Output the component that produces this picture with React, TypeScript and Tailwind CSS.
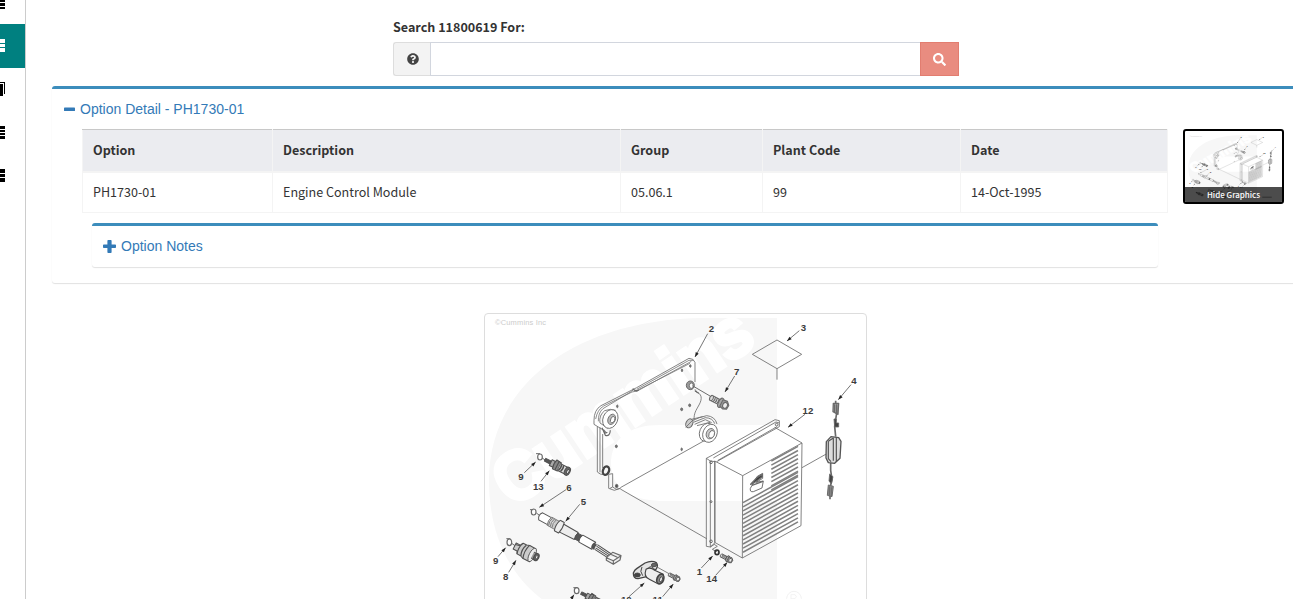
import React from "react";
import { FaSearch, FaQuestionCircle } from "react-icons/fa";

const labels: [string, number, number][] = [
  ["2", 694, 73], ["3", 970, 68], ["7", 770, 200], ["4", 1122, 228], ["12", 984, 319],
  ["9", 123, 516], ["13", 175, 545], ["6", 267, 550], ["5", 310, 591], ["9", 47, 768],
  ["8", 77, 817], ["1", 658, 800], ["14", 695, 823], ["10", 439, 884], ["11", 533, 884], ["9", 268, 896],
];

const arrows: [number, number, number, number][] = [
  [683, 77, 645, 147], [958, 68, 921, 99], [764, 204, 735, 252], [1113, 230, 1075, 275],
  [975, 319, 924, 358], [133, 494, 167, 462], [183, 520, 208, 488], [258, 545, 178, 598],
  [299, 589, 257, 640], [54, 746, 77, 719], [86, 793, 108, 757], [664, 780, 698, 744],
  [707, 802, 742, 763], [447, 866, 493, 825], [548, 866, 580, 828], [272, 875, 282, 860],
];

function Bolt({ x, y, s = 1 }: { x: number; y: number; s?: number }) {
  return (
    <g transform={`translate(${x} ${y}) rotate(27) scale(${s})`} strokeWidth="3.2">
      <path d="M0-8H32V8H0Q-5 0 0-8M6-8q4 8 0 16M12-8q4 8 0 16M18-8q4 8 0 16M24-8q4 8 0 16" fill="#ddd" />
      <ellipse cx="34" cy="0" rx="7" ry="15" fill="#aaa" />
      <path d="M36-11L50-13 59-4 58 9 47 14 36 10Z" fill="#999" />
      <ellipse cx="49" cy="1" rx="7" ry="9" fill="#eee" />
    </g>
  );
}

function Sensor({ x, y, s = 1 }: { x: number; y: number; s?: number }) {
  return (
    <g transform={`translate(${x} ${y}) rotate(27) scale(${s})`} strokeWidth="3.2">
      <path d="M-5-4H14V5H-5Z" fill="#555" />
      <path d="M14-9H30V10H14Z" fill="#aaa" />
      <path d="M27-15L43-13V14L27 15Q22 0 27-15Z" fill="#888" />
      <path d="M35-14V14M43-10H72V12H43" fill="#ddd" />
      <path d="M45-10q5 10 0 21M52-10q5 10 0 21" strokeWidth="4.5" />
      <ellipse cx="70" cy="1" rx="8" ry="13" fill="#666" />
      <ellipse cx="72" cy="1" rx="3.5" ry="7" fill="#eee" />
    </g>
  );
}

function PartsDrawing({ viewBox, className, stretch }: { viewBox: string; className: string; stretch?: boolean }) {
  const slats = Array.from({ length: 19 }, (_, i) => i);
  return (
    <svg viewBox={viewBox} className={className} preserveAspectRatio={stretch ? "none" : "xMinYMin meet"}>
      <path
        d="M777 318H700C568 321 489 390 489 480C489 590 570 640 690 640H777V501H666C636 501 612 493 611 464C611 438 630 425 660 425H777Z"
        fill="#f7f7f7"
      />
      <text
        transform="translate(512 508) rotate(-33.7)"
        fontFamily="Liberation Sans, Arial, sans-serif"
        fontWeight="700"
        fontSize="69"
        textLength="296"
        lengthAdjust="spacingAndGlyphs"
        fill="#fff"
        stroke="#fff"
        strokeWidth="4"
      >
        Cummins
      </text>
      <text x="495" y="325" fontFamily="Liberation Sans, Arial, sans-serif" fontSize="7.5" fill="#ccc" textLength="51">
        ©Cummins Inc
      </text>
      <g transform="translate(480 308) scale(.33333)" fill="none" stroke="#6a6a6a" strokeWidth="2.5" strokeLinejoin="round">
        <circle cx="942" cy="872" r="22" stroke="#f1f1f1" strokeWidth="3" />
        <path d="M933 885V860h12q8 6 0 12h-12m10 0l9 13" stroke="#f1f1f1" />

        {/* Mounting plate */}
        <path d="M352 356V492Q360 500 370 500M360 358V493M368 378V480M645 222V163Q641 151 627 151L470 239 456 246 363 293Q342 306 342 337V349L378 371" />
        <path d="M641 157L627 157 470 244M634 160L472 249 456 252 371 294Q352 305 347 333M461 245L450 253 369 302Q354 315 355 340M468 249L630 166" stroke="#777" />
        <path d="M458 242q8 10 18 4" strokeWidth="4" />
        <path d="M391 304L374 308Q356 322 360 345L384 361M391 304L407 307" />
        <ellipse cx="391" cy="333" rx="22" ry="29" transform="rotate(22 391 333)" fill="#fff" />
        <ellipse cx="395" cy="334" rx="11" ry="16" transform="rotate(22 395 334)" fill="#bbb" />
        <ellipse cx="398" cy="335" rx="6" ry="10" transform="rotate(22 398 335)" fill="#fff" />
        <path d="M366 359L376 382Q390 386 391 367M371 365q3 14 11 8" strokeWidth="3.5" />
        <ellipse cx="378" cy="488" rx="9" ry="13" transform="rotate(20 378 488)" strokeWidth="7" stroke="#444" />
        <path d="M386 499L398 497V537L409 544 421 541M386 499V541L403 547 421 541M398 537L390 541" />
        <ellipse cx="410" cy="534" rx="4" ry="5" fill="#555" />
        <g fill="#777" strokeWidth="3">
          <ellipse cx="412" cy="295" rx="2" ry="4" />
          <ellipse cx="606" cy="187" rx="2" ry="4" />
          <ellipse cx="631" cy="174" rx="2" ry="4" />
          <ellipse cx="605" cy="304" rx="3" ry="4" />
          <ellipse cx="629" cy="292" rx="3" ry="4" />
          <ellipse cx="605" cy="424" rx="2" ry="4" />
          <ellipse cx="409" cy="415" rx="3" ry="4" />
        </g>
        <ellipse cx="631" cy="232" rx="12" ry="13" fill="#999" strokeWidth="3" />
        <ellipse cx="634" cy="233" rx="6" ry="8" fill="#fff" />
        <path d="M637 233L690 264M645 249l12 7" strokeWidth="3" />
        <path d="M644 249C668 257 667 273 657 291S642 315 642 337M645 244l8 12" />
        <ellipse cx="628" cy="346" rx="10" ry="14" transform="rotate(25 628 346)" fill="#ccc" strokeWidth="3" />
        <path d="M617 358L638 337M637 338Q659 327 680 323Q705 325 711 348M640 343L676 329Q699 330 704 347M644 349L676 335 695 344M651 353L690 343M634 334L668 326" />
        <ellipse cx="680" cy="373" rx="21" ry="28" transform="rotate(22 680 373)" fill="#fff" />
        <ellipse cx="690" cy="376" rx="21" ry="28" transform="rotate(22 690 376)" fill="#fff" />
        <ellipse cx="691" cy="377" rx="12" ry="16" transform="rotate(22 691 377)" fill="#ccc" />
        <ellipse cx="695" cy="379" rx="8" ry="12" transform="rotate(22 695 379)" fill="#fff" />
        <Bolt x={692} y={269} />
        <path d="M421 539L671 399M421 543L680 692" />

        {/* Data plate */}
        <path d="M891 96L965 139 891 182 817 139ZM891 182V215" />

        {/* Control module enclosure */}
        <path d="M679 451L698 441 885 335 898 338V356L710 461M700 450L888 342 898 345M714 457L891 356M679 451V715L691 717 705 708M679 451L691 459 705 461V704L691 717V459" />
        <path d="M884 358L966 405 963 653 787 750 704 703V459L788 503 966 405M788 503L787 750" />
        <g strokeWidth="3">
          <circle cx="693" cy="463" r="4" />
          <circle cx="693" cy="581" r="3" />
          <circle cx="693" cy="700" r="4" />
          <circle cx="890" cy="350" r="4" />
        </g>
        <g stroke="#808080" strokeWidth="4.6">
          {slats.map((i) => {
            const y = 415 + i * 12.4;
            return i < 8 ? <path key={i} d={`M954 ${y}L874 ${y + 44}`} /> : null;
          })}
          {slats.map((i) => {
            const y = 584 + i * 12.4;
            return y < 735 ? <path key={i} d={`M954 ${y - 91}L789 ${y}`} /> : null;
          })}
        </g>
        <path d="M811 541L832 505 848 496V511L829 523 850 519 846 540 820 551Q809 553 811 541Z" fill="#fff" stroke="#555" />
        <path d="M812 529L832 508 847 499V506L826 522ZM816 532L849 520" fill="#333" strokeWidth="4" />

        {/* In-line fuse cable */}
        <path d="M966 479L1046 434" />
        <path d="M1067 278V295M1070 315L1064 355L1067 386M1052 465L1052 487L1056 515L1050 540V574" strokeWidth="5" />
        <path d="M1060 286H1076L1074 319 1059 311ZM1064 289V312M1070 289V316" fill="#aaa" strokeWidth="4" />
        <path d="M1062 333h7v12h7v12h-12ZM1049 498l10 8-5 22-7-9Z" fill="#444" />
        <path d="M1045 531L1060 535 1056 566 1042 562ZM1048 535v27M1054 538v26" fill="#888" strokeWidth="3" />
        <path d="M1039 401L1053 386 1076 389 1083 400 1080 451 1064 466 1045 464 1038 450Z" fill="#ddd" strokeWidth="4" stroke="#555" />
        <path d="M1045 400L1060 390V458M1069 388V462M1045 400V452L1053 461" strokeWidth="3.5" stroke="#555" />

        {/* Sensors and harness */}
        <g fill="#fff">
          <ellipse cx="180" cy="447" rx="7" ry="9" strokeWidth="3.5" />
          <ellipse cx="161" cy="612" rx="7" ry="9" strokeWidth="3.5" />
          <ellipse cx="88" cy="703" rx="7" ry="10" strokeWidth="3.5" />
          <ellipse cx="290" cy="848" rx="7" ry="9" strokeWidth="3.5" />
        </g>
        <path d="M168 437h12M186 450l10 6M150 605h10M169 615l8 6M79 692h12M95 706l10 7M280 839h12" strokeWidth="3" />
        <g stroke="#505050">
          <Sensor x={200} y={457} />
          <Sensor x={308} y={857} s={0.9} />
          <g transform="translate(104 714) rotate(27)">
            <path d="M0-10H14L19-19H31L40-22 61-21V22H38L29 18H17L13 10H0Z" fill="#ccc" strokeWidth="3" />
            <path d="M18-18Q11 0 17 18M30-18Q22 0 30 18M39-22Q31 0 39 22M0-5L14-8" strokeWidth="3.5" />
            <ellipse cx="59" cy="0" rx="9" ry="22" fill="#eee" />
            <path d="M60-10H72V10H60" fill="#999" />
            <ellipse cx="73" cy="0" rx="7" ry="11" fill="#666" strokeWidth="4" />
            <ellipse cx="74" cy="0" rx="3" ry="6" fill="#eee" />
          </g>
          <g transform="translate(182 625) rotate(29)">
            <path d="M0-12H30V12H0Q-10 0 0-12Z" fill="#fff" strokeWidth="3" />
            <path d="M30-14H57V14H30Q24 0 30-14M34-13q-5 13 0 26M40-13q-5 13 0 26M46-13q-5 13 0 26" fill="#ccc" stroke="#777" />
            <path d="M57-18H71Q76 0 71 18H57Q50 0 57-18M71-13L122-12V12L71 14" fill="#eee" strokeWidth="3" />
            <path d="M122-10H138V10H122Q117 0 122-10" fill="#555" />
            <path d="M138-12H182V12H138Q132 0 138-12Z" fill="#fff" strokeWidth="3" />
            <path d="M181-9q-5 9 0 18M187-8q-5 9 0 18" strokeWidth="5" />
            <path d="M190-8L239-4M190-3L238 1M190 3L237 6M190 8L237 11" strokeWidth="3" />
          </g>
        </g>
        <path d="M379 749L398 733 423 743 420 756 400 769 379 757ZM379 749L400 758 423 743M400 758V769M392 739l20 9" fill="#eee" strokeWidth="3.5" />

        {/* Flange sensor */}
        <g stroke="#444">
          <path d="M460 795Q464 786 470 782L495 765Q515 756 529 764Q536 773 528 784L500 806 474 812Q460 812 460 795Z" fill="#e4e4e4" strokeWidth="4" />
          <ellipse cx="472" cy="801" rx="9" ry="6" fill="#444" />
          <ellipse cx="522" cy="771" rx="8" ry="5" fill="#666" />
          <path d="M498 784Q490 807 508 814L534 827 550 799 524 787Q511 776 498 784Z" fill="#eee" strokeWidth="3.5" />
          <path d="M486 777Q478 790 488 803M505 780q10-10 20 6" strokeWidth="3" />
          <ellipse cx="541" cy="813" rx="10" ry="15" transform="rotate(20 541 813)" fill="#888" strokeWidth="5" />
          <ellipse cx="543" cy="814" rx="4" ry="8" transform="rotate(20 543 814)" fill="#eee" />
        </g>
        <path d="M531 777L567 797M704 710L712 715 697 724 712 732" />
        <g stroke="#444">
          <Bolt x={567} y={799} s={0.62} />
          <Bolt x={723} y={742} s={0.65} />
        </g>
        <ellipse cx="711" cy="733" rx="6" ry="7" strokeWidth="5" stroke="#333" />

        {/* Lower row of parts */}
        <Sensor x={130} y={890} s={1.2} />
        <Sensor x={410} y={920} s={1.3} />
        <path d="M960 960h120" strokeWidth="9" />

        {arrows.map(([x1, y1, x2, y2]) => {
          const a = (Math.atan2(y2 - y1, x2 - x1) * 180) / Math.PI;
          return (
            <g key={`${x1}-${y1}`}>
              <path d={`M${x1} ${y1}L${x2} ${y2}`} strokeWidth="2.8" />
              <path d="M0 0L-14-5V5Z" transform={`translate(${x2} ${y2}) rotate(${a})`} fill="#222" stroke="none" />
            </g>
          );
        })}
        <g fill="#3c3c3c" stroke="none" fontFamily="Liberation Sans, Arial, sans-serif" fontWeight="700" fontSize="29" textAnchor="middle">
          {labels.map(([t, x, y]) => (
            <text key={`${x}-${y}`} x={x} y={y}>{t}</text>
          ))}
        </g>
      </g>
    </svg>
  );
}

function NavBars({ d, className }: { d: string; className: string }) {
  return (
    <div className={className}>
      <svg width="6" height="44" viewBox="0 0 6 44" shapeRendering="crispEdges" className="block">
        <path d={d} fill="currentColor" />
      </svg>
    </div>
  );
}

const columns = [
  { head: "Option", value: "PH1730-01" },
  { head: "Description", value: "Engine Control Module" },
  { head: "Group", value: "05.06.1" },
  { head: "Plant Code", value: "99" },
  { head: "Date", value: "14-Oct-1995" },
];

export default function App() {
  return (
    <div className="flex h-[599px] w-full overflow-hidden bg-white font-['Noto_Sans_CJK_SC','Noto_Sans',sans-serif] text-[13px] text-[#333]">
      <nav className="flex w-[26px] shrink-0 flex-col border-r border-[#ccc] text-black">
        <NavBars className="h-6" d="M0 0h5v2H0zM0 3h5v3H0zM0 7h5v2H0z" />
        <NavBars className="h-11 bg-[#008080] text-white" d="M0 15h5v4H0zM0 20h5v3H0zM0 24h5v4H0z" />
        <NavBars className="h-11" d="M0 14h5v12H4V15H0zM0 16h3v12H0z" />
        <NavBars className="h-[43px]" d="M0 14h5v3H0zM0 18h5v2H0zM0 21h5v2H0zM0 24h5v3H0z" />
        <NavBars className="h-11" d="M0 14h5v4H0zM0 19h5v3H0zM0 23h5v4H0z" />
      </nav>

      <main className="flex min-w-0 flex-1 flex-col">
        <form className="ml-[367px] mt-[17px] w-[566px]">
          <label className="block h-[25px] text-[12.55px] leading-5 font-bold">Search 11800619 For:</label>
          <div className="flex h-[34px]">
            <span className="flex w-[37px] items-center justify-center rounded-l-[3px] border border-r-0 border-[#ddd] bg-[#f3f3f3]">
              <FaQuestionCircle className="ml-px size-3 text-[#444]" />
            </span>
            <input className="w-[490px] border border-r-0 border-[#d2d6de] bg-white outline-none" />
            <button type="button" className="flex w-[39px] items-center justify-center border border-[#e27d70] bg-[#e98c80]">
              <FaSearch className="size-[13px] text-white" />
            </button>
          </div>
        </form>

        <section className="-mr-1 ml-[26px] mt-[10px] h-[197px] shrink-0 rounded-[3px] border-t-[3px] border-[#3c8dbc] shadow-[0_1px_1px_rgba(0,0,0,0.12)]">
          <h3 className="flex h-10 items-center gap-[5px] pl-3 pt-[1px] font-['Liberation_Sans',Arial,sans-serif] text-[14px] text-[#337ab7]">
            <svg width="11" height="11" viewBox="0 0 11 11">
              <rect y="3.5" width="11" height="3.6" rx="0.7" fill="currentColor" />
            </svg>
            Option Detail - PH1730-01
          </h3>
          <div className="flex gap-[15px] pl-[30px]">
            <div className="w-[1086px]">
              <table className="h-[83px] w-full table-fixed border-collapse text-left text-[12.55px] leading-5">
                <colgroup>
                  <col className="w-[190px]" />
                  <col className="w-[348px]" />
                  <col className="w-[142px]" />
                  <col className="w-[198px]" />
                  <col />
                </colgroup>
                <thead>
                  <tr className="h-[42px]">
                    {columns.map((c) => (
                      <th key={c.head} className="border border-b-2 border-[#f4f4f4] border-t-[#c8c8c8] bg-[#ebecf0] px-[10px] font-bold">{c.head}</th>
                    ))}
                  </tr>
                </thead>
                <tbody>
                  <tr className="h-[41px]">
                    {columns.map((c) => (
                      <td key={c.head} className="border border-[#f4f4f4] px-[10px]">{c.value}</td>
                    ))}
                  </tr>
                </tbody>
              </table>
              <div className="mx-[10px] mt-[10px] h-11 rounded-[3px] border-t-[3px] border-[#3c8dbc] shadow-[0_1px_1px_rgba(0,0,0,0.12)]">
                <h3 className="flex h-10 items-center gap-[5px] pl-[11px] font-['Liberation_Sans',Arial,sans-serif] text-[14px] text-[#337ab7]">
                  <svg width="13" height="13" viewBox="0 0 13 13">
                    <path d="M5.2 0h2.6q.8 0 .8.8v3.6h3.6q.8 0 .8.8v2q0 .8-.8.8H8.6v4.2q0 .8-.8.8H5.2q-.8 0-.8-.8V8H.8Q0 8 0 7.200v-2q0-.8.8-.8h3.600V.8q0-.8.8-.8z" fill="currentColor" />
                  </svg>
                  Option Notes
                </h3>
              </div>
            </div>
            <div className="relative h-[75px] w-[101px] overflow-hidden rounded-[3px] border-2 border-black">
              <PartsDrawing viewBox="475 297 408 355" className="block h-full w-full" stretch />
              <div className="absolute inset-x-0 bottom-0 h-[15px] bg-black/70 text-center text-[8px] leading-[16px] font-medium text-white">Hide Graphics</div>
            </div>
          </div>
        </section>

        <figure className="ml-[458px] mt-[30px] h-[320px] w-[383px] shrink-0 rounded border border-[#ddd] bg-white">
          <PartsDrawing viewBox="485 314 381 318" className="block h-[318px] w-[381px]" />
        </figure>
      </main>
    </div>
  );
}
